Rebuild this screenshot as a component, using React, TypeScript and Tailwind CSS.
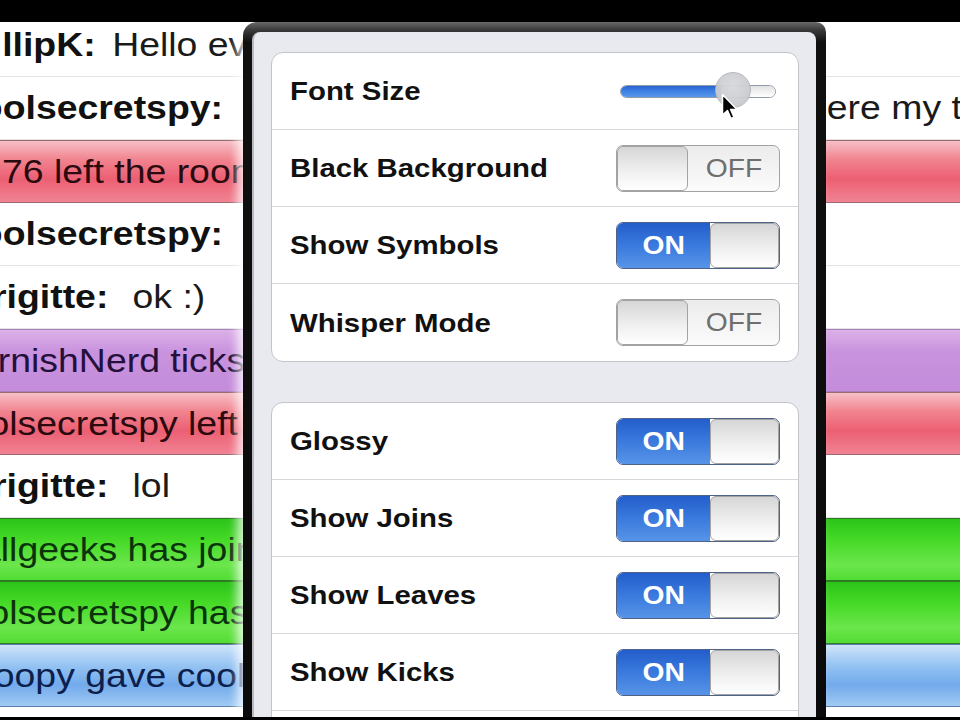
import React from "react";

type Row = {
  kind: "white" | "red" | "purple" | "green" | "blue";
  offset: string;
  gap?: string;
  name?: string;
  msg?: string;
  text?: string;
  right?: string;
};

const rowBg: Record<Row["kind"], string> = {
  white: "bg-white border-b border-[#e4e4e4]",
  red: "border-y border-[#9a6a70] bg-[linear-gradient(to_bottom,#f6c0c7_0%,#f1848f_30%,#ec5f73_62%,#f08393_100%)] text-[#2a0a0e]",
  purple:
    "border-y border-[#a77fbf] bg-[linear-gradient(to_bottom,#dcb0e8_0%,#c993de_35%,#c48cdb_100%)] text-[#24103a]",
  green:
    "border-y border-[#2e7a22] bg-[linear-gradient(to_bottom,#2cc41a_0%,#46da27_35%,#6be64c_75%,#52dc34_100%)] text-[#0b330b]",
  blue: "border-y border-[#5b7fa8] bg-[linear-gradient(to_bottom,#cfe4fa_0%,#93c2f2_35%,#72aaeb_65%,#9fcaf3_100%)] text-[#0c1f4d]",
};

const rows: Row[] = [
  { kind: "white", offset: "-ml-[56px]", gap: "ml-[15px]", name: "PhillipK:", msg: "Hello everyone" },
  { kind: "white", offset: "-ml-[41px]", name: "coolsecretspy:", right: "here my trip" },
  { kind: "red", offset: "ml-[2px]", text: "76 left the room" },
  { kind: "white", offset: "-ml-[41px]", name: "coolsecretspy:" },
  { kind: "white", offset: "-ml-[35px]", gap: "ml-[22px]", name: "Brigitte:", msg: "ok :)" },
  { kind: "purple", offset: "-ml-[50px]", text: "CornishNerd ticks coolsecretspy" },
  { kind: "red", offset: "-ml-[51px]", text: "coolsecretspy left the room" },
  { kind: "white", offset: "-ml-[35px]", gap: "ml-[22px]", name: "Brigitte:", msg: "lol" },
  { kind: "green", offset: "-ml-[20px]", text: "allgeeks has joined" },
  { kind: "green", offset: "-ml-[51px]", text: "coolsecretspy has joined" },
  { kind: "blue", offset: "-ml-[52px]", text: "Snoopy gave coolsecretspy a gift" },
];

function ChatRow({ r }: { r: Row }) {
  return (
    <div
      className={`grid h-[63px] shrink-0 grid-cols-[806px_1fr] items-center overflow-hidden whitespace-nowrap ${rowBg[r.kind]}`}
    >
      <div className="overflow-visible">
        <span
          className={`inline-block origin-left scale-x-[1.1] text-[34px] leading-none ${r.offset}`}
        >
          {r.name && <span className="font-bold text-[#111]">{r.name}</span>}
          {r.msg && <span className={`${r.gap} text-[#1a1a1a]`}>{r.msg}</span>}
          {r.text && <span>{r.text}</span>}
        </span>
      </div>
      <div>
        {r.right && (
          <span className="inline-block origin-left scale-x-[1.1] text-[34px] leading-none text-[#1a1a1a]">
            {r.right}
          </span>
        )}
      </div>
    </div>
  );
}

function Toggle({ on }: { on: boolean }) {
  if (on) {
    return (
      <div className="flex h-[47px] w-[164px] shrink-0 overflow-hidden rounded-[7px] border border-[#4f6388] bg-white">
        <div className="flex w-[93px] items-center justify-center bg-[linear-gradient(to_bottom,#235dca_0%,#3877dc_45%,#5794e8_100%)]">
          <span className="inline-block scale-x-[1.13] text-[25px] font-bold leading-none text-white">ON</span>
        </div>
        <div className="flex-1 rounded-[6px] border border-[#a3a3a3] bg-[linear-gradient(to_bottom,#d6d6d6_0%,#efefef_55%,#ffffff_100%)]" />
      </div>
    );
  }
  return (
    <div className="flex h-[47px] w-[164px] shrink-0 overflow-hidden rounded-[7px] border border-[#a2a2a2] bg-[linear-gradient(to_bottom,#ececec,#fbfbfb)]">
      <div className="w-[71px] rounded-[6px] border border-[#a3a3a3] bg-[linear-gradient(to_bottom,#d6d6d6_0%,#efefef_55%,#ffffff_100%)]" />
      <div className="flex flex-1 items-center justify-center">
        <span className="inline-block scale-x-[1.13] text-[25px] leading-none text-[#6e6e6e]">OFF</span>
      </div>
    </div>
  );
}

function Slider() {
  return (
    <div className="relative mr-[4px] h-[47px] w-[156px] shrink-0">
      <div className="absolute left-0 top-[17px] flex h-[13px] w-[156px] overflow-hidden rounded-full border border-[#8f9aab]">
        <div className="w-[100px] bg-[linear-gradient(to_bottom,#2a64cf,#3f82e4_50%,#5a98ea)]" />
        <div className="flex-1 bg-[linear-gradient(to_bottom,#e2e2e2,#ffffff)]" />
      </div>
      <div className="absolute left-[95px] top-[4px] h-[36px] w-[36px] rounded-full border border-[#b5b6bb] bg-[radial-gradient(circle_at_50%_40%,#d9dade,#c3c4c9)] opacity-95" />
    </div>
  );
}

function SettingRow({ label, control, last }: { label: string; control: React.ReactNode; last?: boolean }) {
  return (
    <div
      className={`flex h-[77px] shrink-0 items-center justify-between px-[18px] ${last ? "" : "border-b border-[#d8d8dc]"}`}
    >
      <span className="inline-block origin-left scale-x-[1.13] text-[26px] font-bold leading-none text-[#111]">
        {label}
      </span>
      {control}
    </div>
  );
}

function Cursor() {
  return (
    <svg
      className="absolute left-[721px] top-[71px]"
      width="18"
      height="28"
      viewBox="0 0 18 28"
    >
      <path
        d="M1.5 1.5 L1.5 22 L6.5 17.5 L10 25.5 L13 24.2 L9.6 16.4 L16 16.4 Z"
        fill="#000"
        stroke="#fff"
        strokeWidth="1.5"
        strokeLinejoin="round"
      />
    </svg>
  );
}

export default function App() {
  return (
    <div className="flex h-[720px] w-[960px] flex-col overflow-hidden bg-black font-['Liberation_Sans',Arial,sans-serif]">
      <div className="h-[22px] shrink-0 bg-black" />
      <div className="relative h-[695px] shrink-0 overflow-hidden bg-white">
        <div className="-mt-[8px] flex flex-col">
          {rows.map((r, i) => (
            <ChatRow key={i} r={r} />
          ))}
          <div className="h-[40px] bg-white" />
        </div>

        {/* Popover */}
        <div className="absolute left-[243px] top-0 flex h-[700px] w-[583px] flex-col rounded-tl-[14px] rounded-tr-[10px] bg-[linear-gradient(to_bottom,#6a6a6a_0px,#3a3a3a_8px,#101010_20px,#0a0a0a_100%)] pl-[9px] pr-[10px] pt-[10px] shadow-[-6px_0_10px_0_rgba(255,255,255,0.75)]">
          <div className="flex flex-1 flex-col overflow-hidden rounded-t-[8px] border-l-2 border-[#b9bac0] bg-[#e9eaef] px-[17px] pt-[20px]">
            <div className="flex shrink-0 flex-col overflow-hidden rounded-[12px] border border-[#c3c4c9] bg-white">
              <SettingRow label="Font Size" control={<Slider />} />
              <SettingRow label="Black Background" control={<Toggle on={false} />} />
              <SettingRow label="Show Symbols" control={<Toggle on />} />
              <SettingRow label="Whisper Mode" control={<Toggle on={false} />} last />
            </div>
            <div className="mt-[40px] flex shrink-0 flex-col rounded-t-[12px] border border-[#c3c4c9] bg-white">
              <SettingRow label="Glossy" control={<Toggle on />} />
              <SettingRow label="Show Joins" control={<Toggle on />} />
              <SettingRow label="Show Leaves" control={<Toggle on />} />
              <SettingRow label="Show Kicks" control={<Toggle on />} />
              <div className="h-[40px]" />
            </div>
          </div>
        </div>

        <Cursor />
      </div>
      <div className="h-[3px] shrink-0 bg-black" />
    </div>
  );
}
